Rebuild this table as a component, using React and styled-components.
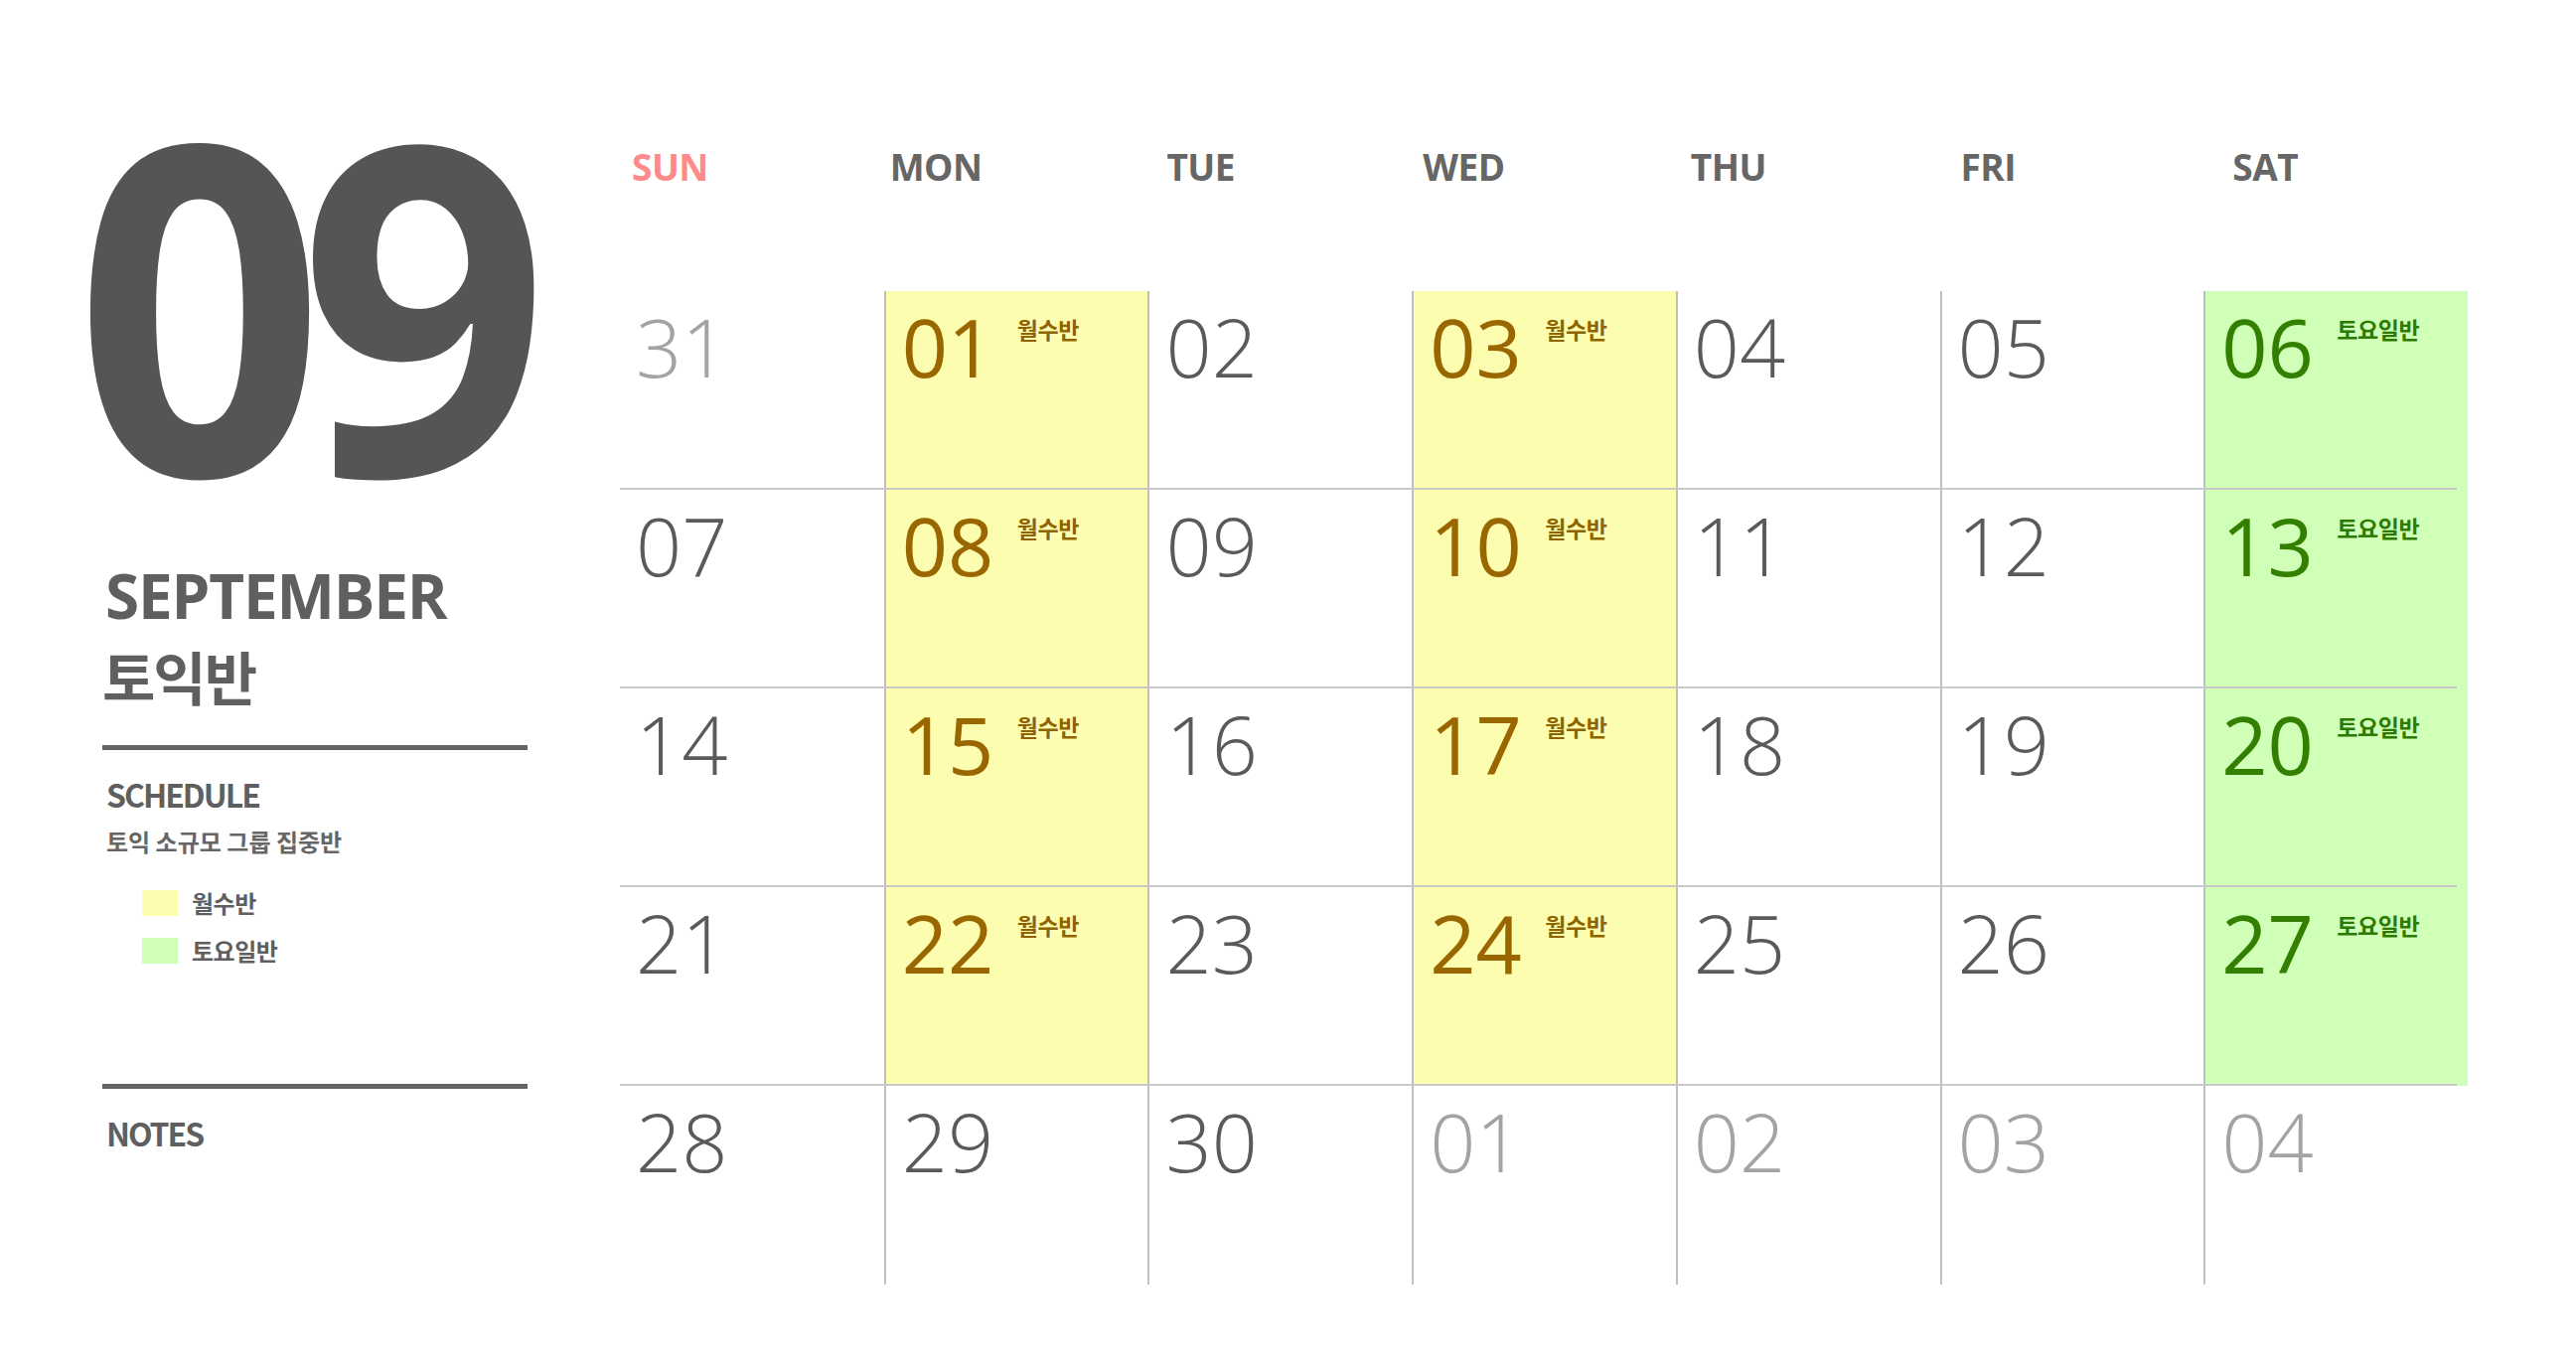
import React from "react";
import styled, { createGlobalStyle } from "styled-components";

const GlobalStyle = createGlobalStyle`
  html, body {
    margin: 0;
    padding: 0;
    background: #ffffff;
  }
  body {
    font-family: "Open Sans", "Noto Sans CJK KR", sans-serif;
  }
  * {
    box-sizing: border-box;
  }
`;

const KR = `"Noto Sans CJK KR", "Noto Sans", sans-serif`;

const Page = styled.div`
  display: flex;
  align-items: flex-start;
  width: 2593px;
  height: 1373px;
  padding-left: 103px;
  overflow: hidden;
`;

const Sidebar = styled.aside`
  width: 428px;
  padding-top: 127px;
  display: flex;
  flex-direction: column;
  color: #5f5f5f;
`;

const BigMonth = styled.div`
  font-family: "Open Sans", sans-serif;
  font-weight: 700;
  font-size: 462px;
  line-height: 0.75;
  letter-spacing: -0.06em;
  color: #555555;
  margin-left: -28px;
  white-space: nowrap;
  transform: scaleX(0.955);
  transform-origin: left center;
`;

const MonthName = styled.div`
  margin-top: 94px;
  padding-left: 3px;
  font-family: "Open Sans", sans-serif;
  font-weight: 700;
  font-size: 62px;
  line-height: 1;
  letter-spacing: -1.2px;
  color: #5f5f5f;
`;

const CourseName = styled.div`
  margin-top: 21px;
  font-family: ${KR};
  font-weight: 700;
  font-size: 58px;
  line-height: 1;
  letter-spacing: -2px;
  color: #5f5f5f;
`;

const Rule = styled.div`
  height: 5px;
  background: #646464;
  margin-top: ${(p) => p.$gap}px;
`;

const SectionTitle = styled.div`
  margin-top: 28px;
  padding-left: 4px;
  font-family: ${KR};
  font-weight: 700;
  font-size: 32px;
  line-height: 1;
  letter-spacing: -2px;
  color: #5f5f5f;
`;

const Subtitle = styled.div`
  margin-top: 20px;
  padding-left: 4px;
  font-family: ${KR};
  font-weight: 700;
  font-size: 24px;
  line-height: 1;
  color: #666666;
`;

const Legend = styled.ul`
  list-style: none;
  margin: 37px 0 0;
  padding: 0 0 0 40px;
  display: flex;
  flex-direction: column;
  gap: 22px;
`;

const LegendItem = styled.li`
  display: flex;
  align-items: center;
  gap: 14px;
  height: 26px;
`;

const Swatch = styled.span`
  width: 36px;
  height: 26px;
  background: ${(p) => p.$color};
`;

const LegendText = styled.span`
  font-family: ${KR};
  font-weight: 700;
  font-size: 24px;
  line-height: 1;
  letter-spacing: -0.5px;
  color: #5f5f5f;
`;

const Calendar = styled.section`
  margin-left: 93px;
  width: 1860px;
  padding-top: 149px;
`;

const HeadRow = styled.div`
  display: grid;
  grid-template-columns: repeat(7, 1fr);
  height: 144px;
`;

const DayName = styled.div`
  padding-left: ${(p) => p.$indent}px;
  font-family: "Open Sans", sans-serif;
  font-weight: 700;
  font-size: 37px;
  line-height: 1;
  letter-spacing: -0.5px;
  color: ${(p) => (p.$sunday ? "#ff8a8a" : "#666666")};
`;

const Weeks = styled.div`
  display: grid;
  grid-template-columns: repeat(7, 1fr);
  grid-auto-rows: 200px;
`;

const palette = {
  mwf: { bg: "#fdfdb0", num: "#996600", tag: "#8f6400" },
  sat: { bg: "#d0ffb8", num: "#338000", tag: "#2e7a00" },
};

const Cell = styled.div`
  position: relative;
  display: flex;
  align-items: flex-start;
  padding: 15px 0 0 16px;
  background: ${(p) => (p.$kind ? palette[p.$kind].bg : "transparent")};
  border-left: ${(p) => (p.$first ? "none" : "2px solid #bfbfbf")};

  &::after {
    content: "";
    display: ${(p) => (p.$lastRow ? "none" : "block")};
    position: absolute;
    left: ${(p) => (p.$first ? "0" : "-2px")};
    right: ${(p) => (p.$lastCol ? "11px" : "0")};
    bottom: 0;
    height: 2px;
    background: #c8c8c8;
  }
`;

const DayNum = styled.span`
  width: 116px;
  flex-shrink: 0;
  font-family: "Open Sans", sans-serif;
  font-size: 81px;
  line-height: 1;
  font-weight: ${(p) => (p.$kind ? 400 : 300)};
  color: ${(p) =>
    p.$kind ? palette[p.$kind].num : p.$muted ? "#a3a3a3" : "#5a5a5a"};
`;

const Tag = styled.span`
  margin-top: 12px;
  font-family: ${KR};
  font-weight: 700;
  font-size: 23px;
  line-height: 1;
  letter-spacing: -0.4px;
  color: ${(p) => palette[p.$kind].tag};
`;

const days = [
  { name: "SUN", indent: 12, sunday: true },
  { name: "MON", indent: 6 },
  { name: "TUE", indent: 19 },
  { name: "WED", indent: 11 },
  { name: "THU", indent: 15 },
  { name: "FRI", indent: 21 },
  { name: "SAT", indent: 29 },
];

const tags = { mwf: "월수반", sat: "토요일반" };

// column kind: mon / wed get the 월수반 class, sat gets 토요일반
const columnKind = [null, "mwf", null, "mwf", null, null, "sat"];

const weeks = [
  [[31, true], [1], [2], [3], [4], [5], [6]],
  [[7], [8], [9], [10], [11], [12], [13]],
  [[14], [15], [16], [17], [18], [19], [20]],
  [[21], [22], [23], [24], [25], [26], [27]],
  [[28], [29], [30], [1, true], [2, true], [3, true], [4, true]],
];

const pad = (n) => String(n).padStart(2, "0");

export default function App() {
  return (
    <>
      <GlobalStyle />
      <Page>
        <Sidebar>
          <BigMonth>09</BigMonth>
          <MonthName>SEPTEMBER</MonthName>
          <CourseName>토익반</CourseName>
          <Rule $gap={41} />
          <SectionTitle>SCHEDULE</SectionTitle>
          <Subtitle>토익 소규모 그룹 집중반</Subtitle>
          <Legend>
            <LegendItem>
              <Swatch $color={palette.mwf.bg} />
              <LegendText>월수반</LegendText>
            </LegendItem>
            <LegendItem>
              <Swatch $color={palette.sat.bg} />
              <LegendText>토요일반</LegendText>
            </LegendItem>
          </Legend>
          <Rule $gap={121} />
          <SectionTitle>NOTES</SectionTitle>
        </Sidebar>

        <Calendar>
          <HeadRow>
            {days.map((d) => (
              <DayName key={d.name} $indent={d.indent} $sunday={d.sunday}>
                {d.name}
              </DayName>
            ))}
          </HeadRow>
          <Weeks>
            {weeks.map((week, r) =>
              week.map(([n, muted], c) => {
                const kind = !muted && r < 4 ? columnKind[c] : null;
                return (
                  <Cell
                    key={`${r}-${c}`}
                    $kind={kind}
                    $first={c === 0}
                    $lastCol={c === 6}
                    $lastRow={r === weeks.length - 1}
                  >
                    <DayNum $kind={kind} $muted={muted}>
                      {pad(n)}
                    </DayNum>
                    {kind && <Tag $kind={kind}>{tags[kind]}</Tag>}
                  </Cell>
                );
              })
            )}
          </Weeks>
        </Calendar>
      </Page>
    </>
  );
}
